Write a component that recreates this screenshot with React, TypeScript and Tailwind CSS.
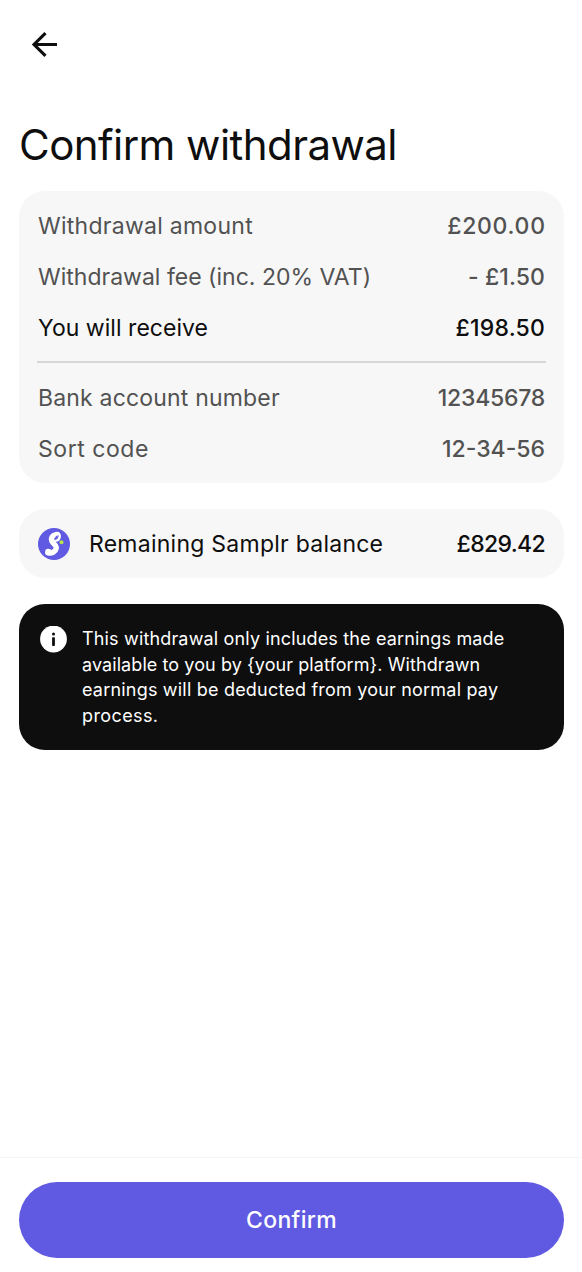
type Row = {
  label: string;
  value: string;
  labelClass: string;
  valueClass: string;
};

const amounts: Row[] = [
  { label: "Withdrawal amount", value: "£200.00", labelClass: "text-[#525252] tracking-[0.27px]", valueClass: "text-[#525252] tracking-[0.7px] -mr-[0.7px]" },
  { label: "Withdrawal fee (inc. 20% VAT)", value: "- £1.50", labelClass: "text-[#525252] tracking-[0.01px]", valueClass: "text-[#525252] tracking-[0.1px]" },
  { label: "You will receive", value: "£198.50", labelClass: "text-[#0e0e0e] tracking-[0.04px]", valueClass: "text-[#0e0e0e] tracking-[0.2px]" },
];

const bank: Row[] = [
  { label: "Bank account number", value: "12345678", labelClass: "text-[#525252] tracking-[0.18px]", valueClass: "text-[#525252] tracking-[-0.25px]" },
  { label: "Sort code", value: "12-34-56", labelClass: "text-[#525252] tracking-[0.55px]", valueClass: "text-[#525252] tracking-[0px]" },
];

function DetailRow({ row }: { row: Row }) {
  return (
    <div className="flex h-[51px] items-center justify-between whitespace-nowrap text-[23px]">
      <span className={row.labelClass}>{row.label}</span>
      <span className={`font-medium ${row.valueClass}`}>{row.value}</span>
    </div>
  );
}

function SamplrLogo() {
  return (
    <svg className="size-8 shrink-0" viewBox="0 0 32 32" fill="none">
      <circle cx="16" cy="16" r="16" fill="#6059e2" />
      <path
        d="M17.6 6.8C13.8 7.4 12.8 10.6 13.8 13C15 15.8 18.8 17.4 18.2 20.4C17.4 24 13.6 25.6 10.2 24.8"
        stroke="#fff"
        strokeWidth="5.4"
        strokeLinecap="round"
      />
      <circle cx="10.3" cy="23.9" r="3.2" fill="#fff" />
      <path d="M17.6 5.2C20.8 4.2 22.2 6.4 21.7 9C21.2 11.6 19.4 12.8 17.2 12.6" stroke="#fff" strokeWidth="2.4" strokeLinecap="round" />
      <path d="M17.9 11.2C17.7 9.6 18.2 8.4 19.3 8.2" stroke="#6059e2" strokeWidth="1.3" strokeLinecap="round" />
      <circle cx="23.5" cy="14.3" r="2" fill="#b9e34b" />
    </svg>
  );
}

export default function App() {
  return (
    <div className="flex h-[1272px] w-full flex-col bg-white font-['Inter',sans-serif] text-[#0e0e0e]">
      <header className="px-[31px] pt-[31px]">
        <button className="block" aria-label="Back">
          <svg width="27" height="27" viewBox="0 0 27 27" fill="none" stroke="currentColor" strokeWidth="3.1">
            <path d="M26 13.5H3M14.5 2.2L3 13.5L14.5 24.8" />
          </svg>
        </button>
      </header>

      <main className="flex-1 px-[19px] pt-[62px]">
        <h1 className="h-[50px] whitespace-nowrap text-[42px] leading-[50px] font-[370] tracking-[-0.55px]">Confirm withdrawal</h1>

        {/* Withdrawal details */}
        <section className="mt-[21px] h-[292px] w-[545px] rounded-[26px] bg-[#f7f7f7] px-[19px] pt-[10px]">
          {amounts.map((row) => (
            <DetailRow key={row.label} row={row} />
          ))}
          <div className="-mx-px mt-[7px] mb-[10px] h-[2px] bg-[#d6d6d4]" />
          {bank.map((row) => (
            <DetailRow key={row.label} row={row} />
          ))}
        </section>

        {/* Balance */}
        <section className="mt-[26px] flex h-[69px] w-[545px] items-center rounded-[26px] bg-[#f7f7f7] px-[19px] text-[23px] whitespace-nowrap">
          <SamplrLogo />
          <span className="mt-0.5 ml-[19px] tracking-[0.25px]">Remaining Samplr balance</span>
          <span className="mt-0.5 ml-auto font-medium tracking-[-0.65px]">£829.42</span>
        </section>

        <section className="mt-[26px] flex h-[146px] w-[545px] rounded-[26px] bg-[#0e0e0e] pt-[22px] pl-[21px] text-white">
          <svg className="size-[27px] shrink-0" viewBox="0 0 27 27">
            <circle cx="13.5" cy="13" r="13.4" fill="#fff" />
            <circle cx="13.5" cy="7.9" r="1.5" fill="#0e0e0e" />
            <rect x="12.1" y="11.2" width="2.8" height="8.8" rx="0.8" fill="#0e0e0e" />
          </svg>
          <p className="ml-[15px] whitespace-nowrap text-[18px] leading-[25.5px]">
            <span className="block tracking-[0.16px]">This withdrawal only includes the earnings made</span>
            <span className="block tracking-[0.08px]">available to you by {"{your platform}"}. Withdrawn</span>
            <span className="block tracking-[0.2px]">earnings will be deducted from your normal pay</span>
            <span className="block tracking-[0.4px]">process.</span>
          </p>
        </section>
      </main>

      <footer className="h-[115px] border-t border-[#f4f4f4] px-[19px] pt-6">
        <button className="flex h-[76px] w-[545px] items-center justify-center rounded-full bg-[#6059e2] pt-px text-[23px] font-medium tracking-[0.3px] text-white">
          Confirm
        </button>
      </footer>
    </div>
  );
}
